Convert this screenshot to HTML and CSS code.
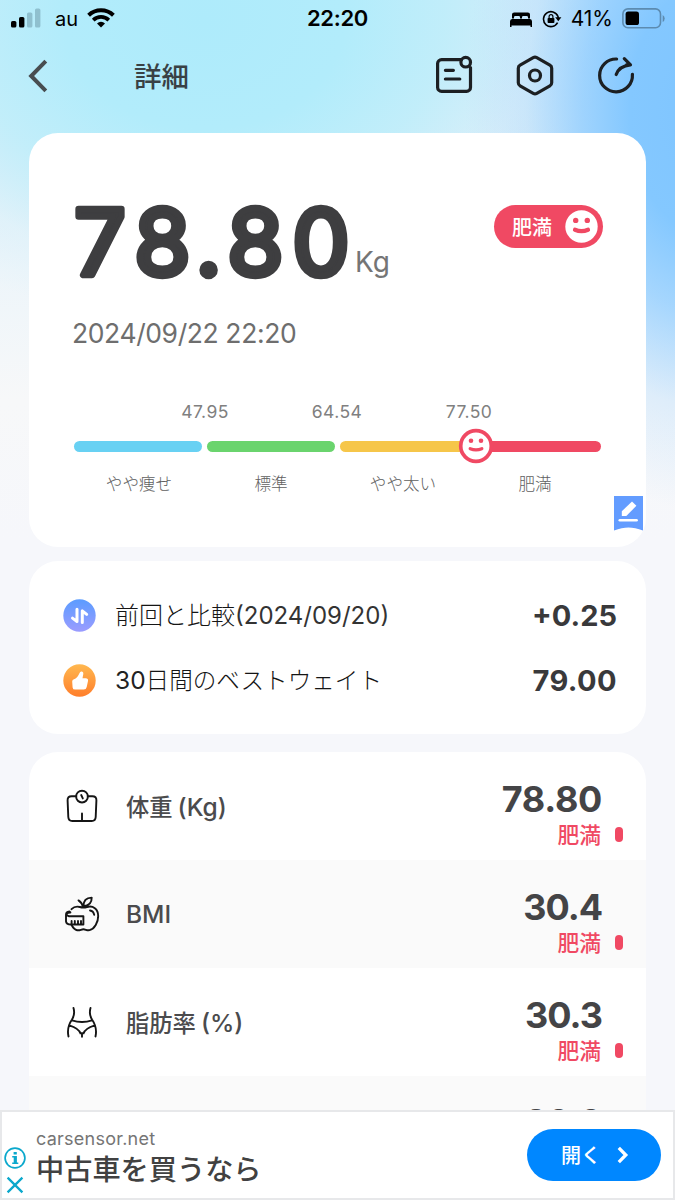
FILE: index.html
```html
<!DOCTYPE html>
<html lang="ja">
<head>
<meta charset="utf-8">
<title>詳細</title>
<link rel="stylesheet" href="styles.css">
</head>
<body>
<div class="screen">
  <div class="status">
    <div class="status-left">
      <svg width="32" height="20" viewBox="0 0 32 20"><rect x="0" y="13" width="5.4" height="6.6" rx="1.6"/><rect x="8" y="9" width="5.4" height="10.6" rx="1.6"/><g fill="#8fc0cf"><rect x="16" y="4.500" width="5.400" height="15.100" rx="1.600"/><rect x="24" y="0.500" width="5.400" height="19.100" rx="1.600"/></g></svg>
      <span class="carrier">au</span>
      <svg class="wifi" width="28" height="20" viewBox="0 0 28 20" fill="none" stroke="#000"><path d="M1.600 7.200a18 18 0 0 1 24.800 0" stroke-width="4"/><path d="M6.200 12.100a11.200 11.200 0 0 1 15.600 0" stroke-width="3.700"/><path d="M14 19.500l-4-4.100a5.900 5.900 0 0 1 8 0z" fill="#000" stroke="none"/></svg>
    </div>
    <span class="clock">22:20</span>
    <div class="status-right">
      <svg class="bed" width="22" height="15" viewBox="0 0 22 15"><path d="M2 6.500V2.500Q2 .4 4.200.4h13.600Q20 .4 20 2.500v4h-2V5.300q0-1.300-1.300-1.300h-3.500Q12 4 12 5.300v1.200h-2V5.300Q10 4 8.800 4H5.300Q4 4 4 5.300v1.200zM2 7h18q2 .4 2 2.600V15h-1.500v-1.500h-19V15H0V9.600Q0 7.400 2 7z"/></svg>
      <svg class="lock" width="20" height="18" viewBox="0 0 20 18"><path d="M15.600 12.700A7.500 7.500 0 1 1 15.900 6.200L16.300 8" fill="none" stroke="#000" stroke-width="1.600"/><path d="M13.200 7.300h6.200l-3.100 4z"/><rect x="5.600" y="7.900" width="6.800" height="5.100" rx=".8"/><path d="M7.100 8V6.500a1.900 1.900 0 0 1 3.800 0V8" fill="none" stroke="#000" stroke-width="1.200"/></svg>
      <span class="percent">41%</span>
      <svg class="battery" width="44" height="21" viewBox="0 0 44 21"><rect x=".9" y=".9" width="37.600" height="18.800" rx="5" fill="none" stroke="#5c8bb0" stroke-width="1.600"/><rect x="3.600" y="3.600" width="13.400" height="13.400" rx="2.600"/><path d="M40.700 7v7q2-1.200 2-3.500t-2-3.500z" fill="#5c8bb0"/></svg>
    </div>
  </div>

  <div class="nav">
    <svg class="back" width="20" height="34" viewBox="0 0 20 34"><path d="M17.800 2.200L3.200 17l14.600 14.800" fill="none" stroke="#484d50" stroke-width="4"/></svg>
    <h1 class="title">詳細</h1>
    <div class="actions">
      <svg width="38" height="40" viewBox="0 0 38 40" fill="none" stroke="#1c1f22" stroke-width="3.200" stroke-linecap="round"><path d="M26.500 4.600H6.600a4 4 0 0 0-4 4v23.800a4 4 0 0 0 4 4h24.900a4 4 0 0 0 4-4V12.500"/><circle cx="30.700" cy="7.200" r="4.800"/><path d="M10.400 15.300h8M10.400 24h14.400"/></svg>
      <svg width="38" height="42" viewBox="0 0 38 42" fill="none" stroke="#1c1f22" stroke-width="3.200"><path d="M17.200 2.700q1.800-1 3.600 0l13.100 7.500q1.800 1 1.800 3v14.600q0 2-1.800 3l-13.100 7.500q-1.800 1-3.600 0L4.100 30.800q-1.800-1-1.800-3V13.200q0-2 1.800-3z"/><circle cx="19" cy="20.500" r="5.500"/></svg>
      <svg width="38" height="40" viewBox="0 0 38 40" fill="none" stroke="#1c1f22" stroke-width="3.200" stroke-linecap="round" stroke-linejoin="round"><path d="M19.600 4A16.400 16.400 0 1 0 35.400 19.300M19.200 19.500q2.800-8.500 14.200-9.700M27.300 3.600l6.200 6.200H29.500"/></svg>
    </div>
  </div>

  <section class="card summary">
    <div class="summary-head">
      <svg class="weight" width="281" height="100" viewBox="0 0 281 100"><text x="28 90.500 136.500 183.500 249" y="72">78.80</text></svg>
      <span class="unit">Kg</span>
      <div class="pill"><span>肥満</span>
        <svg width="33" height="33" viewBox="0 0 33 33"><circle cx="16.500" cy="16.500" r="16.200" fill="#fff"/><g fill="#f04963"><circle cx="10.700" cy="10.400" r="2.700"/><circle cx="22.300" cy="10.400" r="2.700"/></g><path d="M10 19.800q6.500 2.800 13 0" fill="none" stroke="#f04963" stroke-width="4.200" stroke-linecap="round"/></svg>
      </div>
    </div>
    <div class="date">2024/09/22 22:20</div>
    <div class="limits"><span>47.95</span><span>64.54</span><span>77.50</span></div>
    <div class="scale">
      <i class="thin"></i><i class="normal"></i><i class="heavy"></i><i class="obese"></i>
      <svg class="marker" width="36" height="36" viewBox="0 0 36 36"><circle cx="18" cy="18" r="15.300" fill="#fff" stroke="#f04963" stroke-width="3.700"/><g fill="#f04963"><circle cx="13" cy="12.800" r="2.300"/><circle cx="23" cy="12.800" r="2.300"/></g><path d="M12.200 20.700q5.800 2.200 11.600 0" fill="none" stroke="#f04963" stroke-width="3.300" stroke-linecap="round"/></svg>
    </div>
    <div class="labels"><span>やや痩せ</span><span>標準</span><span>やや太い</span><span>肥満</span></div>
    <svg class="note" width="29" height="35" viewBox="0 0 29 35"><path d="M0 0h29v34.500q-8-3-14.500-3T0 34.500z" fill="#639cff"/><path d="M7.800 20v-4.700L18 5.400l4.400 4.400L12.300 20z" fill="#fff"/><path d="M5.800 24.200h16.800" stroke="#fff" stroke-width="2.600" stroke-linecap="round"/></svg>
  </section>

  <section class="card compare">
    <div class="compare-row">
      <svg width="33" height="33" viewBox="0 0 33 33"><defs><linearGradient id="blue" x2="0" y2="1"><stop stop-color="#5b9cff"/><stop offset="1" stop-color="#9b9cff"/></linearGradient></defs><circle cx="16.500" cy="16.500" r="16.200" fill="url(#blue)"/><path d="M14 10.300v12.300l-4.500-3.500M19.300 23.500V11.800l4.400 3.500" fill="none" stroke="#fff" stroke-width="3" stroke-linecap="round" stroke-linejoin="round"/></svg>
      <span class="compare-name">前回と比較<b>(2024/09/20)</b></span><strong>+0.25</strong>
    </div>
    <div class="compare-row">
      <svg width="33" height="33" viewBox="0 0 33 33"><defs><linearGradient id="orange" x2="0" y2="1"><stop stop-color="#ffb84f"/><stop offset="1" stop-color="#ff7e2b"/></linearGradient></defs><circle cx="16.500" cy="16.500" r="16.200" fill="url(#orange)"/><path d="M9.200 17.500q0-1.900 1.800-2.300 3.300-1 5.300-5.600.8-2.400 2.600-2 2.100.5 1.100 4l-.5 2.600h3.100q2.900 0 2.400 2.800l-1.300 6.100q-.5 2.500-3 2.500h-8.600q-2.300 0-2.500-2.200z" fill="#fff"/></svg>
      <span class="compare-name best"><b>30</b>日間のベストウェイト</span><strong class="best-value">79.00</strong>
    </div>
  </section>

  <section class="card metrics">
    <div class="metric">
      <svg class="metric-icon" width="36" height="38" viewBox="0 0 36 38" fill="none" stroke="#151515" stroke-width="1.900" stroke-linecap="round"><path d="M12.300 8.200H7.600q-4.200 0-4 4.200l.7 16.600q.2 4 4 4h19.400q3.800 0 4-4l.7-16.600q.2-4.200-4-4.200h-4.700M18 32.500v-7"/><circle cx="18" cy="8.600" r="5.900"/><path d="M17.200 7l1.600 3.400"/></svg>
      <span class="metric-name">体重<span class="measure">(Kg)</span></span>
      <div class="reading"><strong>78.80</strong><em>肥満</em></div>
    </div>
    <div class="metric">
      <svg class="metric-icon" width="36" height="38" viewBox="0 0 36 38" fill="none" stroke="#151515" stroke-width="1.900" stroke-linecap="round" stroke-linejoin="round"><path d="M7.500 13.200q3.500-3.600 8.300-2.200 3.600 1 7.200 0c6-1.800 11.200 2 11.200 9 0 6.500-3.700 13-8.600 14.200-2.600.6-4-.9-6.200-.9s-3.600 1.500-6.200.9c-2.500-.6-4.300-2.600-5.600-5.200M19 11q-.6-4-4.500-6.600M19.500 10.300q-.2-8.500 8.200-8.700.2 8-8.200 8.700zM26 14.500q3.500.5 4.200 4.400"/><path d="M5.400 15.500q-3.400.5-3.400 3.300v6.500q.3 3 5 3.200h12.400v-8.300H5q-2.700-.5-2.500-2 .8-1.700 3.900-1.700zM7.600 25v3M10.800 25v3M14 25v3M17 25v3"/></svg>
      <span class="metric-name latin">BMI</span>
      <div class="reading short"><strong>30.4</strong><em>肥満</em></div>
    </div>
    <div class="metric">
      <svg class="metric-icon" width="36" height="38" viewBox="0 0 36 38" fill="none" stroke="#151515" stroke-width="1.900" stroke-linecap="round"><path d="M9.500 4q1.800 6.200-1.500 11.500-5.500 8-3.500 17M26.500 4q-1.800 6.200 1.500 11.500 5.500 8 3.500 17M8 16.300q10 3.400 20 0M5.200 21.300Q15 24.500 16.400 29.300h3.200Q21 24.500 30.800 21.300M18 29.300v3.500"/></svg>
      <span class="metric-name">脂肪率<span class="measure">(%)</span></span>
      <div class="reading short"><strong>30.3</strong><em>肥満</em></div>
    </div>
    <div class="metric">
      <span class="metric-icon"></span><span class="metric-name"></span>
      <div class="reading short partial"><strong>20.0</strong></div>
    </div>
  </section>

  <aside class="ad">
    <div class="ad-controls">
      <svg width="22" height="22" viewBox="0 0 22 22"><circle cx="11" cy="11" r="9.900" fill="none" stroke="#0ba8cc" stroke-width="1.700"/><path d="M9.600 4.900h3.200v2.600H9.600zM8.200 9h4.700v6.600h1.400v1.500H8.200v-1.500h1.500v-5H8.200z" fill="#0ba8cc"/></svg>
      <svg width="18" height="18" viewBox="0 0 18 18"><path d="M1.600 1.600l14.800 14.800M16.400 1.600L1.600 16.400" stroke="#0ba8cc" stroke-width="2.300"/></svg>
    </div>
    <div class="ad-copy"><span class="ad-domain">carsensor.net</span><span class="ad-title">中古車を買うなら</span></div>
    <div class="ad-button"><span>開く</span><svg width="14" height="18" viewBox="0 0 14 18"><path d="M2.800 1.800L9.800 9l-7 7.200" fill="none" stroke="#fff" stroke-width="3.300"/></svg></div>
  </aside>
</div>
</body>
</html>
```
FILE: styles.css
```css
* { box-sizing: border-box; }
body { margin: 0; font-family: Inter, "Noto Sans CJK JP", sans-serif; color: #414143; }
svg { display: block; flex: none; }
.screen {
  height: 1200px; width: 675px; overflow: hidden; display: flex; flex-direction: column;
  background:
    radial-gradient(ellipse 235px 400px at 700px 110px, #7fc5ff 0%, #84c8ff 30%, rgba(140,203,255,.75) 50%, rgba(175,216,252,.35) 74%, rgba(220,236,250,0) 100%),
    radial-gradient(ellipse 400px 310px at 205px 20px, #aeebfb 0%, #b2ecfb 35%, rgba(190,238,250,.85) 60%, rgba(215,241,250,.4) 82%, rgba(230,243,250,0) 100%),
    linear-gradient(#cfe9fa 0, #dbedf9 150px, #edf5fa 270px, #f7f8f9 400px, #f6f7fb 540px);
}
.status { height: 36px; display: grid; grid-template-columns: 1fr auto 1fr; align-items: center; color: #000; }
.status-left { display: flex; align-items: center; padding-left: 11px; }
.carrier { font-size: 20px; line-height: 24px; margin: 1px 9px 0 12px; }
.clock { font-size: 22px; font-weight: 600; line-height: 26px; letter-spacing: -.3px; }
.status-right { display: flex; align-items: center; justify-content: flex-end; padding: 1px 9px 0 0; }
.bed { margin-top: 1px; }
.lock { margin: 1px 9px 0 10px; }
.percent { font-size: 21px; line-height: 26px; margin-right: 9px; margin-top: 1px; }
.battery { margin-top: -1px; }
.nav { height: 97px; display: flex; align-items: flex-start; padding: 23px 40px 0 28px; }
.title { margin: -4px 0 0 86px; font: 500 27.500px/40px "Noto Sans CJK JP", sans-serif; color: #394145; }
.actions { display: flex; gap: 43px; margin: -4px 0 0 auto; }
.card { margin: 0 29px; background: #fff; border-radius: 29px; flex: none; }
.summary { height: 414px; padding: 68px 43px 0 45px; position: relative; }
.summary-head { display: flex; align-items: flex-start; height: 115px; }
.weight { margin: 2px 0 0 -2px; overflow: visible; }
.weight text { font-family: Inter, sans-serif; font-size: 91px; font-weight: 400; text-anchor: middle; fill: #3e3e40; stroke: #3e3e40; stroke-width: 6.500px; stroke-linejoin: round; }
.unit { font-size: 28px; line-height: 34px; margin: 44px 0 0 2px; color: #757575; }
.pill { margin: 4px 0 0 auto; width: 109px; height: 43px; border-radius: 22px; background: #f04963; color: #fff; display: flex; align-items: center; justify-content: space-between; padding: 0 5px 0 18px; font: 500 20px/30px "Noto Sans CJK JP", sans-serif; }
.date { font-size: 26.500px; line-height: 34px; color: #6e6e6e; letter-spacing: -.4px; margin: 0 0 0 -2px; }
.limits { display: grid; grid-template-columns: repeat(3, 132px); justify-content: center; text-align: center; font-size: 17.500px; line-height: 22px; color: #808080; letter-spacing: .4px; margin-top: 51px; padding-right: 3px; }
.scale { display: grid; grid-template-columns: 128px 128px 128px 128px; gap: 5px; height: 11px; margin-top: 18px; position: relative; }
.scale i { border-radius: 6px; }
.thin { background: #68d1f3; }
.normal { background: #6ad46d; }
.heavy { background: #f6c64a; }
.obese { background: #f04963; }
.marker { position: absolute; left: 384px; top: -13px; }
.labels { display: grid; grid-template-columns: repeat(4, 132px); text-align: center; font: 300 16.600px/24px "Noto Sans CJK JP", sans-serif; color: #606060; margin: 19px 0 0 -1px; }
.note { position: absolute; left: 585px; top: 363px; }
.compare { height: 173px; margin-top: 14px; padding: 22px 29px 0 34px; }
.compare-row { display: flex; align-items: center; height: 65px; }
.compare-name { margin-left: 19px; font-size: 24px; font-weight: 300; line-height: 36px; color: #151515; }
.compare-name b { font-weight: 400; color: #333; }
.best { font-size: 23.600px; }
.compare-name.best b { font-size: 24.500px; color: #222; }
.compare-row strong { margin-left: auto; font-size: 29px; line-height: 36px; color: #39393b; }
.compare-row .best-value { letter-spacing: .4px; }
.metrics { height: 432px; margin-top: 18px; overflow: hidden; }
.metric { height: 108px; display: flex; padding: 0 23px 0 35px; }
.metric:nth-child(even) { background: #fafafa; }
.metric-icon { margin-top: 36px; }
.metric-name { margin: 38px 0 0 26px; font-size: 23.300px; font-weight: 500; line-height: 34px; color: #4b4b4d; }
.measure { font-size: 24.500px; margin-left: 5px; }
.metric-name.latin { font-size: 24.500px; margin-top: 37px; }
.reading { margin-left: auto; display: flex; flex-direction: column; align-items: flex-end; padding-top: 25px; }
.reading.partial { padding-top: 24px; }
.reading strong { font-size: 36px; line-height: 44px; margin-right: 21px; color: #444446; letter-spacing: -.3px; }
.short strong { letter-spacing: -1px; }
.reading em { font: 500 21.800px/28px "Noto Sans CJK JP", sans-serif; color: #f04963; display: flex; align-items: center; gap: 14px; margin-top: -1px; }
.reading em::after { content: ""; width: 8px; height: 15px; border-radius: 4px; background: #f04963; margin-top: 1px; }
.ad { position: absolute; top: 1110px; left: 0; width: 675px; height: 90px; background: #fff; border: 2px solid #e7e8ea; display: flex; }
.ad-controls { width: 26px; padding: 35px 0 0 0; display: flex; flex-direction: column; gap: 7px; align-items: center; }
.ad-copy { display: flex; flex-direction: column; padding: 15px 0 0 8px; }
.ad-domain { font-size: 18px; line-height: 24px; color: #757575; letter-spacing: .25px; }
.ad-title { font: 500 28.200px/38px "Noto Sans CJK JP", sans-serif; color: #414141; margin-top: -2px; }
.ad-button { width: 134px; height: 52px; border-radius: 26px; background: #0087ff; color: #fff; margin: 17px 12px 0 auto; display: flex; align-items: center; padding-left: 34px; gap: 15px; font: 500 20px/30px "Noto Sans CJK JP", sans-serif; }
```
